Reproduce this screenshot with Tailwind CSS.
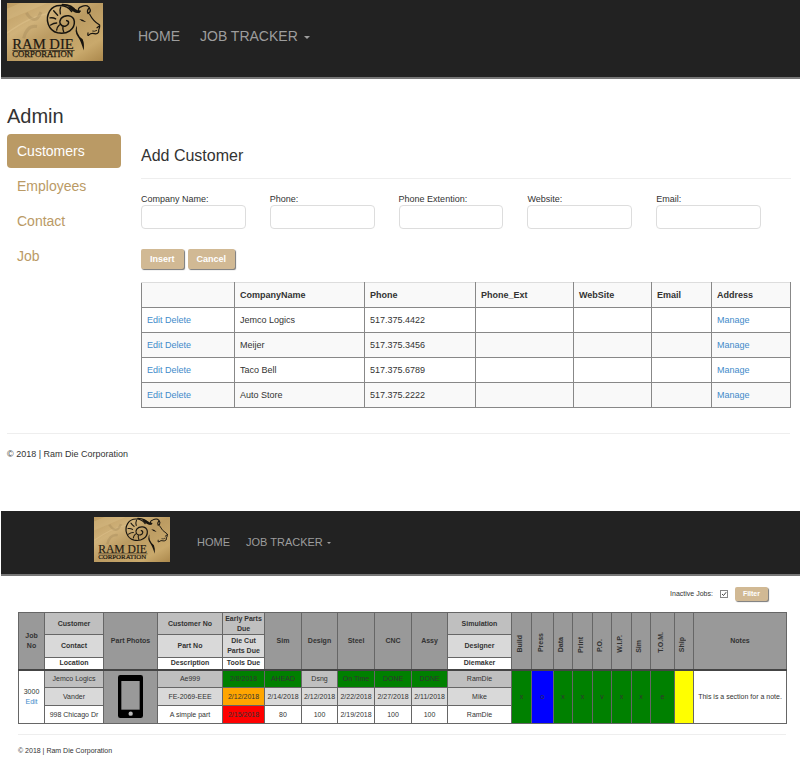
<!DOCTYPE html>
<html lang="en">
<head>
<meta charset="utf-8">
<meta name="viewport" content="width=device-width, initial-scale=1">
<title>Ram Die Corporation</title>
<script src="https://cdn.jsdelivr.net/npm/@tailwindcss/browser@4"></script>
</head>
<body class="bg-white pl-px font-['Liberation_Sans',Arial,sans-serif] text-[#333]">

<svg class="absolute size-0" aria-hidden="true">
  <defs>
    <linearGradient id="wood" x1="0" y1="0" x2="1" y2="1">
      <stop offset="0" stop-color="#bd9c62"/>
      <stop offset=".3" stop-color="#d0b27a"/>
      <stop offset=".5" stop-color="#bb9b62"/>
      <stop offset=".8" stop-color="#c9a96c"/>
      <stop offset="1" stop-color="#ab884c"/>
    </linearGradient>
    <symbol id="logo" viewBox="20 11 288 171" preserveAspectRatio="none">
      <rect x="20" y="11" width="288" height="171" fill="url(#wood)"/>
      <path d="M20 62 L130 16 L140 11 L60 11 L20 28Z" fill="#ddc28c" opacity=".35"/>
      <path d="M20 100 Q90 50 145 42" fill="none" stroke="#e0c48e" stroke-width="4" opacity=".5"/>
      <path d="M78 40 Q105 80 122 38 M70 115 Q80 75 110 80" fill="none" stroke="#9f8456" stroke-width="9" opacity=".35"/>
      <g fill="none" stroke="#17140f" stroke-linecap="round" stroke-linejoin="round">
        <path d="M214 36 C198 14 163 12 148 35 C133 59 144 92 172 99 C200 105 224 88 222 65 C219 45 193 44 182 57 C174 69 182 82 196 79 C206 76 208 64 199 63" stroke-width="4.5"/>
        <path d="M181 23 Q177 33 180 43 M160 34 Q165 40 172 47 M149 55 Q158 53 166 58 M151 76 Q160 70 169 70 M169 91 Q170 82 177 76 M190 96 Q186 89 188 81" stroke-width="4"/>
        <path d="M186 16 Q217 17 224 34 Q230 39 239 35" stroke-width="5"/>
        <path d="M236 39 Q230 25 243 22 Q265 12 270 32 Q270 40 263 42 Q259 34 265 27" stroke-width="4"/>
        <path d="M268 44 Q278 64 298 76 Q299 83 296 88 M298 78 L290 84 M295 90 Q297 101 286 102 Q272 98 266 105 Q261 110 263 99" stroke-width="3.5"/>
        <path d="M289 92 Q282 96 277 94" stroke-width="2.5"/>
      </g>
      <path d="M201 20 Q227 27 239 38 Q223 47 201 20Z M237 58 Q248 58 257 67 Q245 68 237 58Z M230 77 Q226 103 247 118 Q253 132 250 151 Q241 121 233 111 Q220 94 230 77Z" fill="#17140f"/>
      <text x="36" y="147" font-family="Liberation Serif, serif" font-size="44" fill="#1d1912" stroke="#1d1912" stroke-width=".6">RAM DIE</text>
      <path d="M36 151 H223" stroke="#2a241a" stroke-width="2"/>
      <text x="36" y="170" font-family="Liberation Serif, serif" font-size="26" fill="#1d1912" stroke="#1d1912" stroke-width=".8">CORPORATION</text>
    </symbol>
  </defs>
</svg>

<section>
  <header class="flex items-center border-b-2 border-[#777] bg-[#222] pt-[3px] pb-4 pl-1.5">
    <a href="#" aria-label="Ram Die Corporation"><svg class="block h-[58px] w-[96px]"><use href="#logo"/></svg></a>
    <nav class="flex items-center gap-5 pt-2 pl-[35px] text-[14px] leading-5 text-[#9d9d9d]">
      <a href="#">HOME</a>
      <a href="#" class="flex items-center gap-1.5">JOB TRACKER
        <span class="mt-0.5 border-x-3 border-t-3 border-x-transparent border-t-[#9d9d9d]"></span></a>
    </nav>
  </header>

  <div class="grid grid-cols-[114px_1fr] gap-5 pt-[25px] pr-2.5 pl-1.5">
    <aside>
      <h1 class="text-[20px] leading-6">Admin</h1>
      <nav class="mt-1.5 flex flex-col gap-px text-[14px] leading-[34px] text-[#ba9a65]">
        <a href="#" class="rounded bg-[#ba9a65] px-2.5 text-white">Customers</a>
        <a href="#" class="rounded px-2.5">Employees</a>
        <a href="#" class="rounded px-2.5">Contact</a>
        <a href="#" class="rounded px-2.5">Job</a>
      </nav>
    </aside>

    <main class="pt-[42px]">
      <h2 class="text-[16px] leading-5">Add Customer</h2>
      <hr class="mt-3 border-[#eee]">
      <form>
        <div class="mt-3.5 grid grid-cols-5 gap-6 pr-[30px] text-[9px] leading-3">
          <div><label class="block whitespace-nowrap" for="company">Company Name:</label><input id="company" class="block h-6 w-full rounded border border-[#ddd] bg-white px-2" type="text"></div>
          <div><label class="block whitespace-nowrap" for="phone">Phone:</label><input id="phone" class="block h-6 w-full rounded border border-[#ddd] bg-white px-2" type="text"></div>
          <div><label class="block whitespace-nowrap" for="ext">Phone Extention:</label><input id="ext" class="block h-6 w-full rounded border border-[#ddd] bg-white px-2" type="text"></div>
          <div><label class="block whitespace-nowrap" for="website">Website:</label><input id="website" class="block h-6 w-full rounded border border-[#ddd] bg-white px-2" type="text"></div>
          <div><label class="block whitespace-nowrap" for="email">Email:</label><input id="email" class="block h-6 w-full rounded border border-[#ddd] bg-white px-2" type="text"></div>
        </div>
        <div class="mt-5 flex gap-1 text-[9px] leading-5 font-bold text-white">
          <button type="button" class="rounded-xs bg-[#d1b994] px-[9px] shadow-[1px_1px_1px_#777]">Insert</button>
          <button type="button" class="rounded-xs bg-[#d1b994] px-[9px] shadow-[1px_1px_1px_#777]">Cancel</button>
        </div>
      </form>
      <table class="mt-[13px] w-full table-fixed border-collapse text-left text-[9px] leading-3 [&_a]:text-[#428bca] [&_td]:h-[25px] [&_td]:border [&_td]:border-[#888] [&_td]:px-[5px] [&_th]:h-[25px] [&_th]:border [&_th]:border-[#888] [&_th]:border-t-[#ddd] [&_th]:px-[5px]">
        <colgroup><col class="w-[93px]"><col class="w-[130px]"><col class="w-[111px]"><col class="w-[98px]"><col class="w-[78px]"><col class="w-[60px]"><col class="w-[79px]"></colgroup>
        <thead><tr class="bg-[#f9f9f9]"><th></th><th>CompanyName</th><th>Phone</th><th>Phone_Ext</th><th>WebSite</th><th>Email</th><th>Address</th></tr></thead>
        <tbody>
          <tr><td><a href="#">Edit</a> <a href="#">Delete</a></td><td>Jemco Logics</td><td>517.375.4422</td><td></td><td></td><td></td><td><a href="#">Manage</a></td></tr>
          <tr class="bg-[#f9f9f9]"><td><a href="#">Edit</a> <a href="#">Delete</a></td><td>Meijer</td><td>517.375.3456</td><td></td><td></td><td></td><td><a href="#">Manage</a></td></tr>
          <tr><td><a href="#">Edit</a> <a href="#">Delete</a></td><td>Taco Bell</td><td>517.375.6789</td><td></td><td></td><td></td><td><a href="#">Manage</a></td></tr>
          <tr class="bg-[#f9f9f9]"><td><a href="#">Edit</a> <a href="#">Delete</a></td><td>Auto Store</td><td>517.375.2222</td><td></td><td></td><td></td><td><a href="#">Manage</a></td></tr>
        </tbody>
      </table>
    </main>
  </div>
  <footer class="mt-[25px] mr-2.5 ml-1.5 border-t border-[#eee] pt-3.5 text-[9px] leading-3">© 2018 | Ram Die Corporation</footer>
</section>

<section class="mt-[51px]">
  <header class="flex items-center border-b-2 border-[#777] bg-[#222] pt-1.5 pb-3 pl-[93px]">
    <a href="#" aria-label="Ram Die Corporation"><svg class="block h-[45px] w-[76px]"><use href="#logo"/></svg></a>
    <nav class="flex items-center gap-4 pt-1 pl-[27px] text-[11px] leading-4 text-[#9d9d9d]">
      <a href="#">HOME</a>
      <a href="#" class="flex items-center gap-1">JOB TRACKER
        <span class="mt-0.5 border-x-2 border-t-2 border-x-transparent border-t-[#9d9d9d]"></span></a>
    </nav>
  </header>

  <main class="pr-3.5 pl-[17px]">
    <form class="flex items-center justify-end gap-[7px] pt-[11px] pr-[18px] text-[7px] leading-[14px]">
      <label for="inactive">Inactive Jobs:</label>
      <span class="grid *:[grid-area:1/1]">
        <input id="inactive" type="checkbox" checked class="size-2 appearance-none border border-[#888] bg-white">
        <svg class="pointer-events-none size-2" viewBox="0 0 8 8" fill="none" stroke="#444"><path d="M2 4l1.5 1.5L6.2 2.2"/></svg>
      </span>
      <button type="button" class="rounded-xs bg-[#d1b994] px-2 font-bold text-white shadow-[1px_1px_1px_#777]">Filter</button>
    </form>

    <table class="mt-[11px] w-full table-fixed border-collapse text-center text-[7px] leading-[10px] whitespace-nowrap [&_td]:border [&_td]:border-[#666] [&_th]:border [&_th]:border-[#666]">
      <colgroup><col class="w-[26px]"><col class="w-[59px]"><col class="w-[54px]"><col class="w-[65px]"><col class="w-[42px]"><col class="w-[37px]"><col class="w-[36px]"><col class="w-[37px]"><col class="w-[37px]"><col class="w-[36px]"><col class="w-[64px]"><col class="w-[20px]"><col class="w-[22px]"><col class="w-[19px]"><col class="w-[20px]"><col class="w-[19px]"><col class="w-[20px]"><col class="w-[19px]"><col class="w-[24px]"><col class="w-[19px]"><col class="w-[93px]"></colgroup>
      <thead class="border-b-2 border-[#444] bg-[#999]">
        <tr class="h-[22px]">
          <th rowspan="3">Job<br>No</th>
          <th class="bg-[#bfbfbf]">Customer</th>
          <th rowspan="3">Part Photos</th>
          <th class="bg-[#bfbfbf]">Customer No</th>
          <th class="bg-[#bfbfbf]">Early Parts<br>Due</th>
          <th rowspan="3">Sim</th><th rowspan="3">Design</th><th rowspan="3">Steel</th><th rowspan="3">CNC</th><th rowspan="3">Assy</th>
          <th class="bg-[#bfbfbf]">Simulation</th>
          <th rowspan="3" class="pr-1 pb-4 align-bottom"><span class="inline-block rotate-180 align-bottom [writing-mode:vertical-rl]">Build</span></th>
          <th rowspan="3" class="pr-1 pb-4 align-bottom"><span class="inline-block rotate-180 align-bottom [writing-mode:vertical-rl]">Press</span></th>
          <th rowspan="3" class="pr-1 pb-4 align-bottom"><span class="inline-block rotate-180 align-bottom [writing-mode:vertical-rl]">Data</span></th>
          <th rowspan="3" class="pr-1 pb-4 align-bottom"><span class="inline-block rotate-180 align-bottom [writing-mode:vertical-rl]">Print</span></th>
          <th rowspan="3" class="pr-1 pb-4 align-bottom"><span class="inline-block rotate-180 align-bottom [writing-mode:vertical-rl]">P.O.</span></th>
          <th rowspan="3" class="pr-1 pb-4 align-bottom"><span class="inline-block rotate-180 align-bottom [writing-mode:vertical-rl]">W.I.P.</span></th>
          <th rowspan="3" class="pr-1 pb-4 align-bottom"><span class="inline-block rotate-180 align-bottom [writing-mode:vertical-rl]">Sim</span></th>
          <th rowspan="3" class="pr-1 pb-4 align-bottom"><span class="inline-block rotate-180 align-bottom [writing-mode:vertical-rl]">T.O.M.</span></th>
          <th rowspan="3" class="pr-1 pb-4 align-bottom"><span class="inline-block rotate-180 align-bottom [writing-mode:vertical-rl]">Ship</span></th>
          <th rowspan="3">Notes</th>
        </tr>
        <tr class="h-[23px] bg-[#d9d9d9]"><th>Contact</th><th>Part No</th><th>Die Cut<br>Parts Due</th><th>Designer</th></tr>
        <tr class="h-3 bg-white"><th>Location</th><th>Description</th><th>Tools Due</th><th>Diemaker</th></tr>
      </thead>
      <tbody>
        <tr class="h-[18px] bg-[#bfbfbf]">
          <td rowspan="3" class="bg-white">3000<br><a href="#" class="text-[#428bca]">Edit</a></td>
          <td>Jemco Logics</td>
          <td rowspan="3" class="bg-[#999]">
            <svg class="mx-auto block h-[43px] w-[25px]" viewBox="0 0 75 129" role="img" aria-label="Part photo"><rect width="75" height="129" rx="7"/><rect x="10" y="18" width="55" height="86" fill="#999"/><circle cx="38" cy="116" r="6.5" fill="#bbb"/></svg>
          </td>
          <td>Ae999</td>
          <td class="bg-[#008000]">2/8/2018</td>
          <td class="bg-[#008000]">AHEAD</td><td>Dsng</td><td class="bg-[#008000]">On Time</td><td class="bg-[#008000]">DONE</td><td class="bg-[#008000]">DONE</td>
          <td>RamDie</td>
          <td rowspan="3" class="bg-[#008000]">x</td><td rowspan="3" class="bg-[#0000ff]">o</td><td rowspan="3" class="bg-[#008000]">x</td><td rowspan="3" class="bg-[#008000]">x</td><td rowspan="3" class="bg-[#008000]">v</td><td rowspan="3" class="bg-[#008000]">x</td><td rowspan="3" class="bg-[#008000]">x</td><td rowspan="3" class="bg-[#008000]">e</td><td rowspan="3" class="bg-[#ffff00]"></td>
          <td rowspan="3" class="bg-white">This is a section for a note.</td>
        </tr>
        <tr class="h-[18px] bg-[#d9d9d9]"><td>Vander</td><td>FE-2069-EEE</td><td class="bg-[#ffa500]">2/12/2018</td><td>2/14/2018</td><td>2/12/2018</td><td>2/22/2018</td><td>2/27/2018</td><td>2/11/2018</td><td>Mike</td></tr>
        <tr class="h-[18px]"><td>998 Chicago Dr</td><td>A simple part</td><td class="bg-[#ff0000]">2/15/2018</td><td>80</td><td>100</td><td>2/19/2018</td><td>100</td><td>100</td><td>RamDie</td></tr>
      </tbody>
    </table>
    <footer class="mt-2.5 border-t border-[#eee] pt-[11px] text-[7px] leading-[10px]">© 2018 | Ram Die Corporation</footer>
  </main>
</section>
</body>
</html>
